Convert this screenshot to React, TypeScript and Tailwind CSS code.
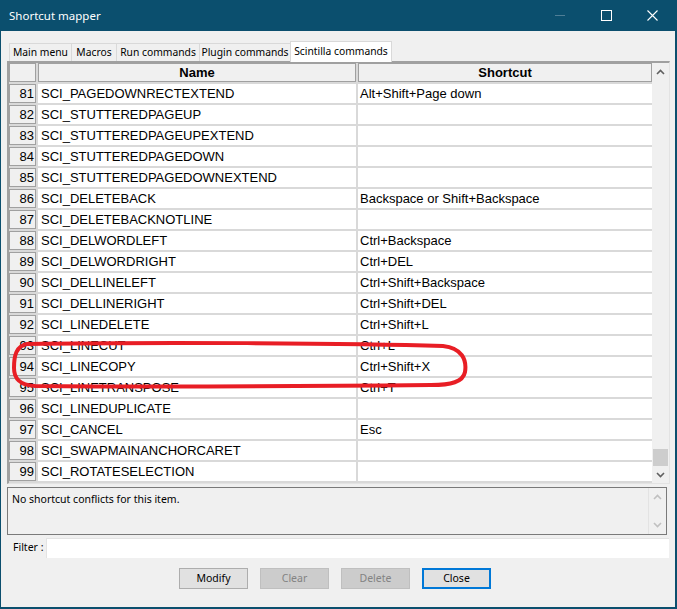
const rows: [number, string, string][] = [
  [81, "SCI_PAGEDOWNRECTEXTEND", "Alt+Shift+Page down"],
  [82, "SCI_STUTTEREDPAGEUP", ""],
  [83, "SCI_STUTTEREDPAGEUPEXTEND", ""],
  [84, "SCI_STUTTEREDPAGEDOWN", ""],
  [85, "SCI_STUTTEREDPAGEDOWNEXTEND", ""],
  [86, "SCI_DELETEBACK", "Backspace or Shift+Backspace"],
  [87, "SCI_DELETEBACKNOTLINE", ""],
  [88, "SCI_DELWORDLEFT", "Ctrl+Backspace"],
  [89, "SCI_DELWORDRIGHT", "Ctrl+DEL"],
  [90, "SCI_DELLINELEFT", "Ctrl+Shift+Backspace"],
  [91, "SCI_DELLINERIGHT", "Ctrl+Shift+DEL"],
  [92, "SCI_LINEDELETE", "Ctrl+Shift+L"],
  [93, "SCI_LINECUT", "Ctrl+L"],
  [94, "SCI_LINECOPY", "Ctrl+Shift+X"],
  [95, "SCI_LINETRANSPOSE", "Ctrl+T"],
  [96, "SCI_LINEDUPLICATE", ""],
  [97, "SCI_CANCEL", "Esc"],
  [98, "SCI_SWAPMAINANCHORCARET", ""],
  [99, "SCI_ROTATESELECTION", ""],
];

const tabs = [
  { label: "Main menu", w: "w-[63px]" },
  { label: "Macros", w: "w-[46px]" },
  { label: "Run commands", w: "w-[84px]" },
  { label: "Plugin commands", w: "w-[92px]" },
];

const Chevron = ({ up, color }: { up?: boolean; color: string }) => (
  <svg width="9" height="6" viewBox="0 0 9 6">
    <path
      d={up ? "M1 5 L4.5 1.5 L8 5" : "M1 1 L4.5 4.5 L8 1"}
      fill="none"
      stroke={color}
      strokeWidth="1.6"
    />
  </svg>
);

const Button = ({ label, disabled, focused }: { label: string; disabled?: boolean; focused?: boolean }) => (
  <div
    className={
      disabled
        ? "w-[69px] h-[21px] flex items-center justify-center bg-[#cccccc] border border-[#bfbfbf] text-[#838383]"
        : focused
        ? "w-[69px] h-[21px] flex items-center justify-center bg-[#e1e1e1] border-2 border-[#0078d7] text-black"
        : "w-[69px] h-[21px] flex items-center justify-center bg-[#e1e1e1] border border-[#adadad] text-black"
    }
  >
    {label}
  </div>
);

export default function App() {
  return (
    <div className="relative w-[677px] h-[609px] flex flex-col bg-[#f0f0f0] border-l border-r-2 border-b-2 border-[#0b4f6e] overflow-hidden font-['Noto_Sans',sans-serif]">
      {/* title bar */}
      <div className="h-[31px] shrink-0 flex items-center bg-[#0b4f6e]">
        <span className="pl-[8px] text-white text-[11.5px]">Shortcut mapper</span>
        <div className="ml-auto flex h-full">
          <div className="w-[46px] h-full flex items-center justify-center">
            <div className="w-[10px] h-px bg-[#4f7e96]" />
          </div>
          <div className="w-[46px] h-full flex items-center justify-center">
            <div className="w-[11px] h-[11px] border border-white" />
          </div>
          <div className="w-[46px] h-full flex items-center justify-center">
            <svg width="11" height="11" viewBox="0 0 11 11">
              <path d="M0.5 0.5 L10.5 10.5 M10.5 0.5 L0.5 10.5" stroke="white" strokeWidth="1.1" />
            </svg>
          </div>
        </div>
      </div>

      <div className="flex-1 flex flex-col pl-[6px]">
        {/* tabs */}
        <div className="h-[30px] pt-[10px] pl-[2px] flex items-end text-[10.3px] text-black">
          {tabs.map((t) => (
            <div
              key={t.label}
              className={`${t.w} h-[18px] flex items-center justify-center bg-[#f0f0f0] border border-b-0 border-[#d9d9d9] -mr-px`}
            >
              {t.label}
            </div>
          ))}
          <div className="w-[102px] h-[21px] -mb-px z-10 flex items-center justify-center bg-white border border-b-0 border-[#d9d9d9]">
            Scintilla commands
          </div>
        </div>

        {/* grid */}
        <div className="w-[663px] h-[423px] flex border-t-2 border-l-2 border-[#a0a0a0] border-r border-b border-r-[#e3e3e3] border-b-[#e3e3e3] font-['Liberation_Sans',Arial,sans-serif] text-[13px] text-black">
          <div className="w-[643px] h-full bg-[#d9d9d9]">
            <div className="grid grid-cols-[27px_318px_294px] auto-rows-[19px] gap-[2px]">
              <div className="bg-[#f0f0f0] border border-[#a0a0a0]" />
              <div className="bg-[#f0f0f0] border border-[#a0a0a0] flex items-center justify-center font-bold">Name</div>
              <div className="bg-[#f0f0f0] border border-[#a0a0a0] flex items-center justify-center font-bold">Shortcut</div>
              {rows.map(([n, name, sc]) => (
                <div key={n} className="contents">
                  <div className="bg-[#f0f0f0] border border-[#a0a0a0] flex items-center justify-end pr-[1px]">{n}</div>
                  <div className="bg-white flex items-center pl-[3px] whitespace-nowrap">{name}</div>
                  <div className="bg-white flex items-center pl-[2px] whitespace-nowrap">{sc}</div>
                </div>
              ))}
            </div>
          </div>
          <div className="w-[17px] h-full flex flex-col bg-[#f0f0f0]">
            <div className="h-[17px] flex items-center justify-center">
              <Chevron up color="#606060" />
            </div>
            <div className="flex-1" />
            <div className="h-[17px] mx-px bg-[#cdcdcd]" />
            <div className="h-[17px] flex items-center justify-center">
              <Chevron color="#606060" />
            </div>
          </div>
        </div>

        {/* conflicts */}
        <div className="mt-[3px] w-[660px] h-[48px] flex border border-[#7a7a7a] text-[10.5px] text-black">
          <div className="flex-1 pl-[4px] pt-[4px]">No shortcut conflicts for this item.</div>
          <div className="w-[18px] flex flex-col justify-between items-center py-[6px] border-l border-[#e3e3e3]">
            <Chevron up color="#c0c0c0" />
            <Chevron color="#c0c0c0" />
          </div>
        </div>

        {/* filter */}
        <div className="mt-[3px] h-[20px] flex items-center text-[10.5px] text-black">
          <span className="w-[39px] pl-[6px]">Filter :</span>
          <div className="w-[623px] h-[20px] bg-white border-t border-l border-[#e3e3e3]" />
        </div>

        {/* buttons */}
        <div className="mt-[10px] pl-[172px] flex gap-[12px] text-[10.5px]">
          <Button label="Modify" />
          <Button label="Clear" disabled />
          <Button label="Delete" disabled />
          <Button label="Close" focused />
        </div>
      </div>

      {/* red annotation */}
      <svg className="absolute left-0 top-0 pointer-events-none" width="677" height="609" viewBox="0 0 677 609">
        <path
          d="M26 344 C150 342 350 343 442 346 C461 348 466 360 464 372 C462 382 450 385 430 385 C330 386 150 387 34 386 C18 385 13 378 13 368 C13 356 15 346 26 344 Z"
          fill="none"
          stroke="#e81e25"
          strokeWidth="4"
          strokeLinejoin="round"
        />
      </svg>
    </div>
  );
}
